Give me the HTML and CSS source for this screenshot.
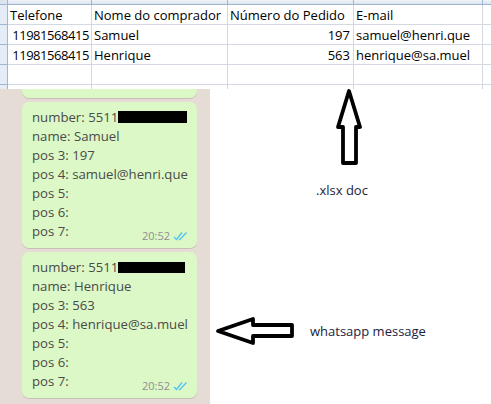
FILE: index.html
```html
<!DOCTYPE html>
<html lang="pt">
<head>
<meta charset="utf-8">
<title>Planilha e mensagem</title>
<link rel="stylesheet" href="styles.css">
</head>
<body>
<div class="sheet">
  <div class="row head">
    <div class="rh"></div><div class="c a"></div><div class="c b"></div><div class="c cc"></div><div class="c d"></div><div class="c e"></div>
  </div>
  <div class="row">
    <div class="rh"></div><div class="c a">Telefone</div><div class="c b">Nome do comprador</div><div class="c cc">Número do Pedido</div><div class="c d">E-mail</div><div class="c e"></div>
  </div>
  <div class="row">
    <div class="rh"></div><div class="c a num">11981568415</div><div class="c b">Samuel</div><div class="c cc right">197</div><div class="c d">samuel@henri.que</div><div class="c e"></div>
  </div>
  <div class="row">
    <div class="rh"></div><div class="c a num">11981568415</div><div class="c b">Henrique</div><div class="c cc right">563</div><div class="c d">henrique@sa.muel</div><div class="c e"></div>
  </div>
  <div class="row">
    <div class="rh"></div><div class="c a"></div><div class="c b"></div><div class="c cc"></div><div class="c d"></div><div class="c e"></div>
  </div>
  <div class="row tail">
    <div class="rh"></div><div class="c a"></div><div class="c b"></div><div class="c cc"></div><div class="c d"></div><div class="c e"></div>
  </div>
</div>

<div class="lower">
  <div class="chat">
    <div class="bubble prev"></div>
    <div class="bubble">
      <div class="line">number: 5511<span class="redact r1"></span></div>
      <div class="line">name: Samuel</div>
      <div class="line">pos 3: 197</div>
      <div class="line">pos 4: samuel@henri.que</div>
      <div class="line">pos 5:</div>
      <div class="line">pos 6:</div>
      <div class="line">pos 7:</div>
      <div class="meta"><span class="time">20:52</span><svg class="ticks" width="15" height="10" viewBox="0 0 15 10"><path d="M1 6 L3.5 8.5 L9 1.5 M6 8 L6.8 8.7 L13.5 1.5" fill="none" stroke="#4fc3f7" stroke-width="1.3"/></svg></div>
    </div>
    <div class="bubble">
      <div class="line">number: 5511<span class="redact r2"></span></div>
      <div class="line">name: Henrique</div>
      <div class="line">pos 3: 563</div>
      <div class="line">pos 4: henrique@sa.muel</div>
      <div class="line">pos 5:</div>
      <div class="line">pos 6:</div>
      <div class="line">pos 7:</div>
      <div class="meta"><span class="time">20:52</span><svg class="ticks" width="15" height="10" viewBox="0 0 15 10"><path d="M1 6 L3.5 8.5 L9 1.5 M6 8 L6.8 8.7 L13.5 1.5" fill="none" stroke="#4fc3f7" stroke-width="1.3"/></svg></div>
    </div>
  </div>

  <div class="notes">
    <svg class="up" width="28" height="78" viewBox="0 0 28 78">
      <path d="M13 2 L24 38 L20 38 L20 74 L7 74 L7 38 L2 38 Z" fill="#fff" stroke="#000" stroke-width="3.8" stroke-linejoin="round"/>
    </svg>
    <div class="label xlsx">.xlsx doc</div>
    <div class="wa">
      <svg class="left" width="80" height="30" viewBox="0 0 80 30">
        <path d="M3 15 L38 3 L38 9 L77 9 L77 20 L38 20 L38 27 Z" fill="#fff" stroke="#000" stroke-width="3.8" stroke-linejoin="round"/>
      </svg>
      <div class="label">whatsapp message</div>
    </div>
  </div>
</div>
</body>
</html>
```

FILE: styles.css
```css
* { box-sizing: border-box; }
html, body { margin: 0; padding: 0; background: #fff; }
body { width: 491px; height: 404px; overflow: hidden; font-family: "Open Sans", "Noto Sans", sans-serif; }

.sheet { display: flex; flex-direction: column; height: 89px; }
.row { display: flex; height: 20px; }
.row.head { height: 5px; }
.row.tail { height: 4px; }
.rh { width: 8px; background: #e4ecf7; border-right: 1px solid #9eb6ce; border-bottom: 1px solid #9eb6ce; }
.row.tail .rh { border-bottom: none; }
.c { border-right: 1px solid #d4d8e0; border-bottom: 1px solid #d4d8e0; font-size: 13px; line-height: 21px; color: #000; padding-left: 2px; white-space: nowrap; overflow: hidden; }
.row.tail .c { border-bottom: none; }
.row.head .c { background: linear-gradient(#f1f4f9, #dbe3ee); border-right-color: #9eb6ce; border-bottom-color: #9eb6ce; }
.row.head .rh { background: #dbe3ee; }
.a { width: 84px; }
.b { width: 136px; }
.cc { width: 126px; }
.d { width: 129px; }
.e { flex: 1; border-right: none; }
.num { text-align: right; padding-right: 2px; letter-spacing: -0.45px; }
.right { text-align: right; padding-right: 3px; }

.lower { display: flex; height: 315px; }
.chat { width: 210px; background-color: #e5ddd5; display: flex; flex-direction: column; gap: 4px; padding-left: 22px; }
.bubble { position: relative; width: 175px; background: #dcf8c6; border-radius: 7px; padding: 6px 0 7px 10px; box-shadow: 0 1px 0.5px rgba(0,0,0,0.13); }
.bubble.prev { height: 9px; padding: 0; border-radius: 0 0 7px 7px; }
.line { font-size: 13.2px; line-height: 19px; color: #4a4a4a; white-space: nowrap; }
.redact { display: inline-block; width: 69px; height: 12px; background: #000; vertical-align: -1px; }
.redact.r2 { width: 67px; height: 11px; }
.meta { position: absolute; right: 9px; bottom: 5px; display: flex; align-items: center; gap: 3px; }
.time { font-size: 11px; color: #8f8f8f; line-height: 14px; }
.ticks { display: block; }

.notes { flex: 1; display: flex; flex-direction: column; align-items: flex-start; }
.up { display: block; margin-left: 126px; margin-top: 0; }
.label { font-size: 13px; line-height: 16px; color: #1b2240; white-space: nowrap; }
.xlsx { margin-left: 106px; margin-top: 15px; }
.wa { display: flex; align-items: center; gap: 15px; margin-top: 118px; margin-left: 5px; }
.left { display: block; }
```
